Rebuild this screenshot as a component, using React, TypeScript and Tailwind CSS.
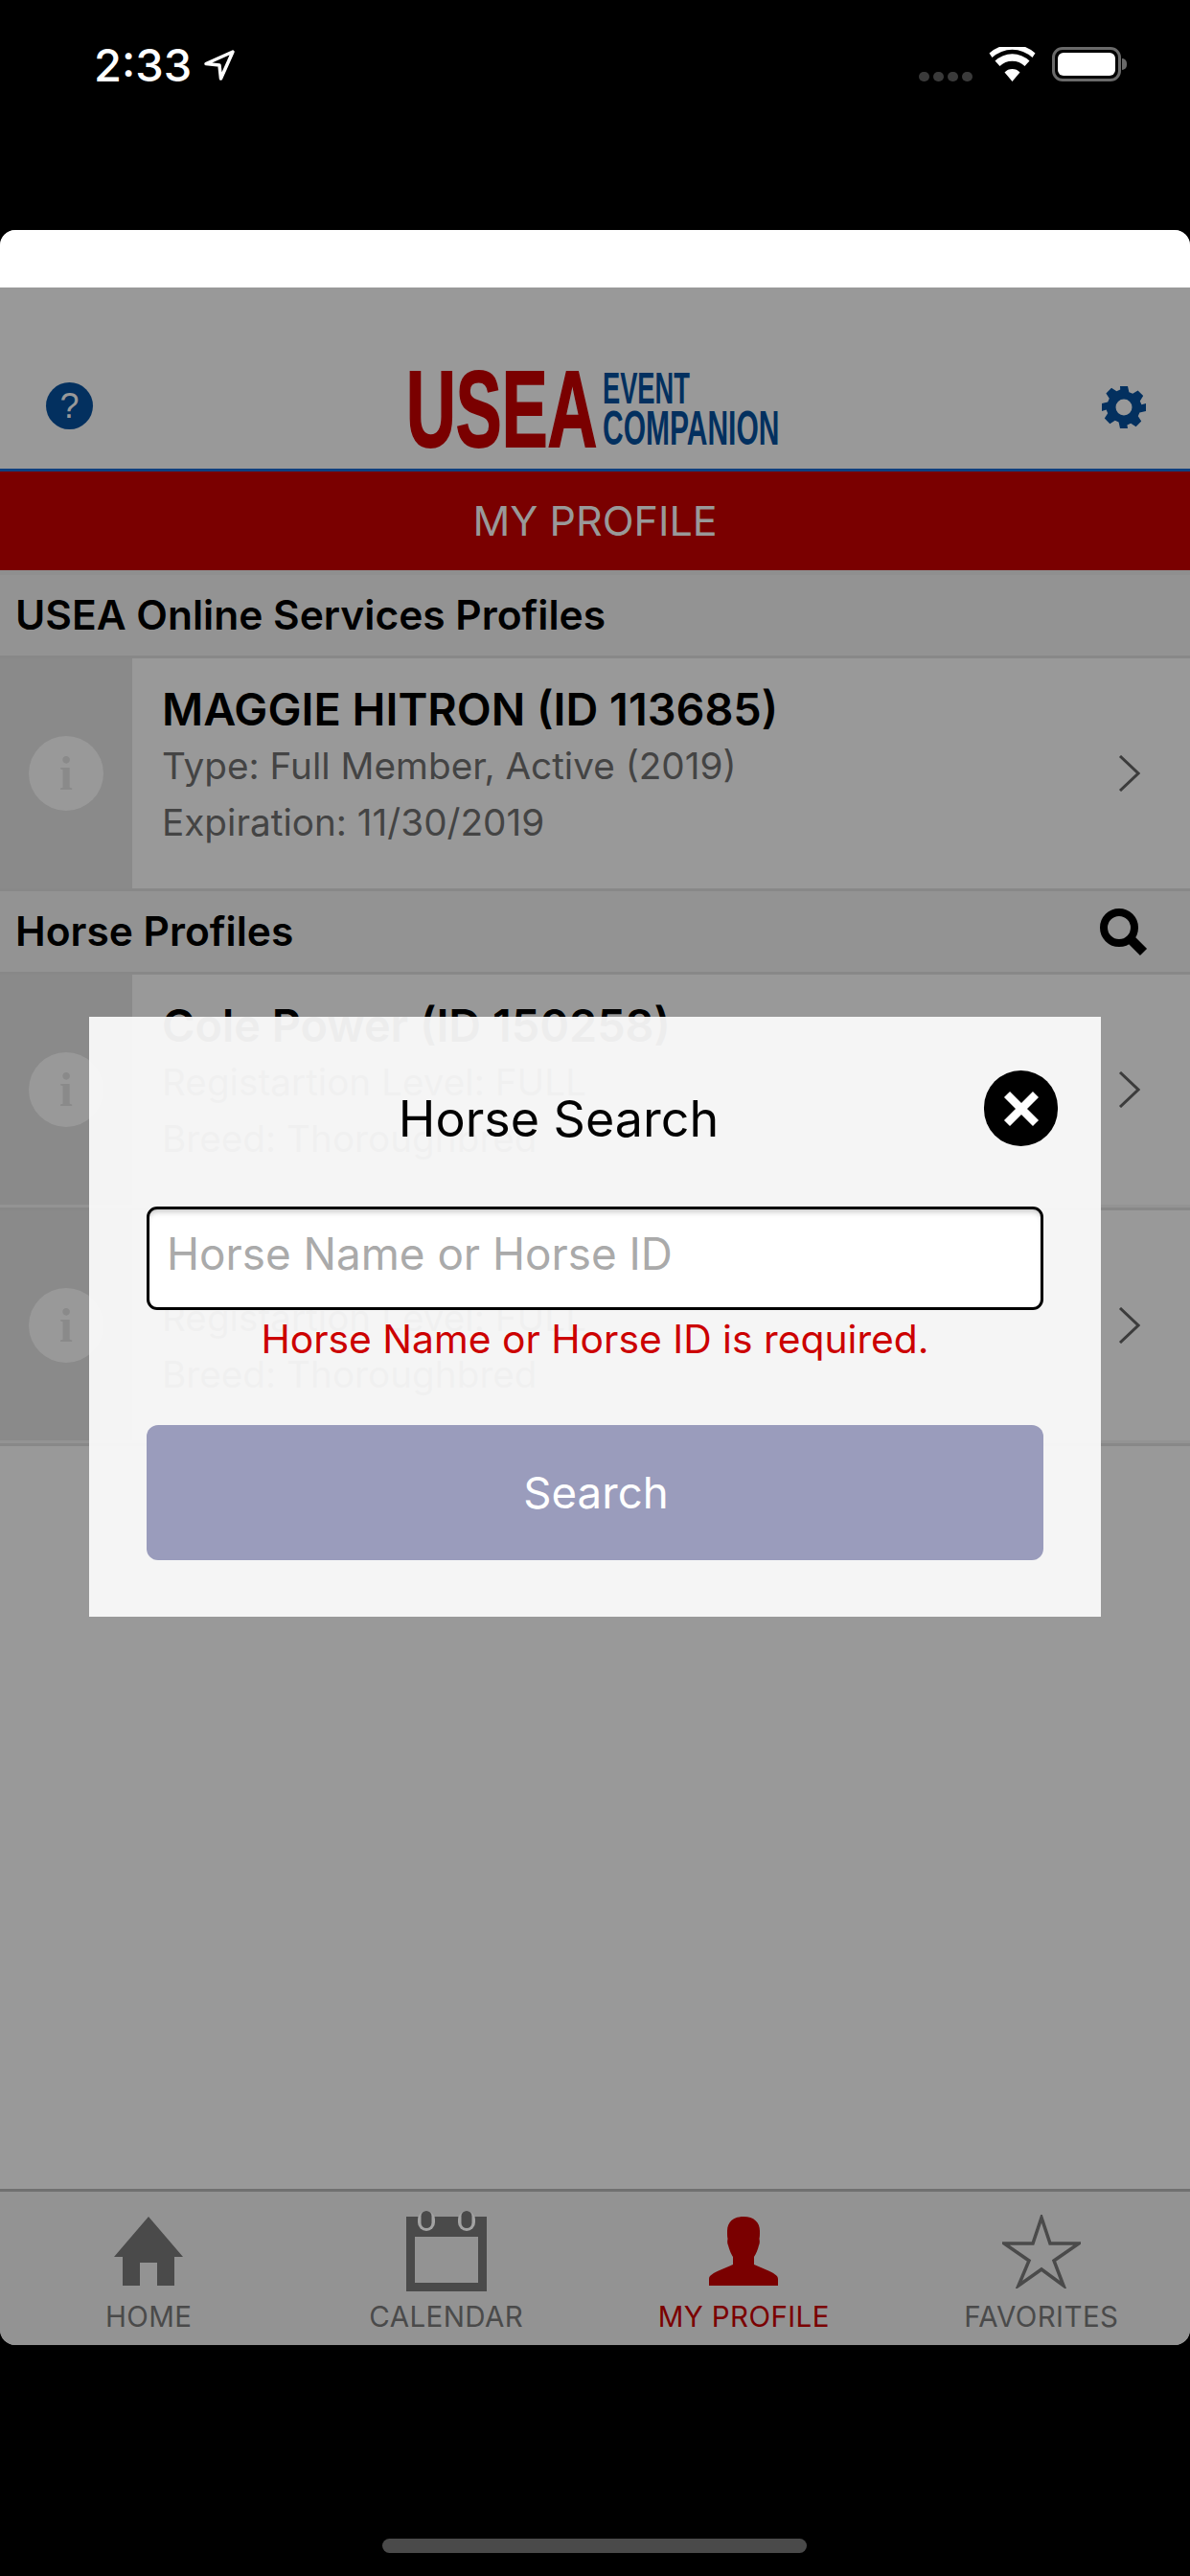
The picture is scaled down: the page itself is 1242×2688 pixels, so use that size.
import type { ReactNode } from "react";

const sans = "font-['Inter','Noto_Sans',sans-serif]";

function HelpIcon() {
  return (
    <div className="w-[49px] h-[49px] rounded-full bg-[#03305f] flex items-center justify-center text-[#999] text-[36px] font-normal font-['Liberation_Sans',sans-serif] leading-none">
      ?
    </div>
  );
}

function GearIcon() {
  return (
    <svg width="46" height="46" viewBox="0 0 46 46">
      <path
        fillRule="evenodd"
        fill="#03305f"
        d="M19 1h8l1.400 6.200 3.800 1.600 5.400-3.400 5.600 5.600-3.400 5.400 1.600 3.800L46 19v8l-6.600 1.400-1.600 3.800 3.400 5.400-5.600 5.600-5.400-3.400-3.800 1.600L27 45h-8l-1.400-6.600-3.800-1.600-5.400 3.400-5.600-5.600 3.400-5.400-1.600-3.800L0 27v-8l6.200-1.400 1.600-3.800-3.400-5.400 5.600-5.600 5.400 3.400 3.800-1.600zM23 14.500a8.500 8.500 0 1 0 0 17 8.500 8.500 0 0 0 0-17z"
      />
    </svg>
  );
}

function Logo() {
  return (
    <div className="flex w-[396px] h-[82px] font-['Liberation_Sans',sans-serif] font-bold">
      <div className="w-[205px] h-[82px] shrink-0">
        <span className="block text-[113px] leading-[82px] text-[#7a0000] whitespace-nowrap origin-left scale-x-[0.635] [-webkit-text-stroke:2px_#7a0000]">
          USEA
        </span>
      </div>
      <div className="flex flex-col text-[#03305f]">
        <div className="h-[42px] w-[191px]">
          <span className="block text-[47px] leading-[38px] whitespace-nowrap origin-left scale-x-[0.58]">EVENT</span>
        </div>
        <div className="h-[38px] w-[191px]">
          <span className="block text-[50px] leading-[38px] whitespace-nowrap origin-left scale-x-[0.6]">COMPANION</span>
        </div>
      </div>
    </div>
  );
}

function InfoBadge() {
  return (
    <div className="w-[78px] h-[78px] rounded-full bg-[#999999] flex items-center justify-center text-[#8a8a8a] text-[50px] font-bold font-['Liberation_Serif',serif] leading-none">
      i
    </div>
  );
}

interface RowProps {
  title: string;
  lines: string[];
}

function ProfileRow({ title, lines }: RowProps) {
  return (
    <div className="flex h-[240px] bg-[#999999]">
      <div className="w-[138px] bg-[#8a8a8a] flex items-center justify-center">
        <InfoBadge />
      </div>
      <div className="flex-1 pl-[31px] pt-[28px]">
        <div className="text-[46.800px] leading-[50px] mb-[5px] font-semibold text-black">{title}</div>
        {lines.map((l) => (
          <div key={l} className="text-[38.700px] leading-[59px] text-[#444444]">
            {l}
          </div>
        ))}
      </div>
      <div className="flex items-center pr-[52px]">
        <svg width="23" height="38" viewBox="0 0 23 38">
          <path d="M2 1l19 18L2 37" fill="none" stroke="#3c3c3c" strokeWidth="3" />
        </svg>
      </div>
    </div>
  );
}

function SectionHeader({ title, search }: { title: string; search?: boolean }) {
  return (
    <div className="flex items-center justify-between h-[84px] bg-[#939393] border-b-[3px] border-[#888888] box-content">
      <div className="pl-[16px] text-[42.500px] font-semibold text-black">{title}</div>
      {search && (
        <svg width="50" height="50" viewBox="0 0 50 50" className="mr-[44px] mt-[2px]">
          <circle cx="20" cy="20" r="16" fill="none" stroke="#000" strokeWidth="8" />
          <path d="M31 31l14.500 14.500" stroke="#000" strokeWidth="10" />
        </svg>
      )}
    </div>
  );
}

function TabItem({ label, active, children }: { label: string; active?: boolean; children: ReactNode }) {
  return (
    <div className="flex-1 flex flex-col items-center pt-[26px]">
      <div className="h-[84px] flex items-start justify-center">{children}</div>
      <div className={`mt-[3px] text-[29.500px] leading-[34px] tracking-[0.4px] ${active ? "text-[#7a0000]" : "text-[#4a4a4a]"}`}>
        {label}
      </div>
    </div>
  );
}

export default function App() {
  return (
    <div className={`relative w-[1242px] h-[2688px] bg-black overflow-hidden ${sans}`}>
      {/* status bar */}
      <div className="h-[240px] pl-[98px] pr-[66px] pt-[41px] flex justify-between items-start text-white">
        <div className="flex items-center gap-[12px]">
          <span className="text-[47px] leading-[54px] font-medium">2:33</span>
          <svg width="34" height="34" viewBox="0 0 34 34">
            <path d="M31 3L3 15.500l14 1.500 1.500 14z" fill="none" stroke="#fff" strokeWidth="3.500" strokeLinejoin="round" />
          </svg>
        </div>
        <div className="flex items-end gap-[17px] mt-[8px]">
          <div className="flex gap-[4px] ml-[2px]">
            <span className="w-[11px] h-[10px] rounded-full bg-[#3a3a3a]" />
            <span className="w-[11px] h-[10px] rounded-full bg-[#3a3a3a]" />
            <span className="w-[11px] h-[10px] rounded-full bg-[#3a3a3a]" />
            <span className="w-[11px] h-[10px] rounded-full bg-[#3a3a3a]" />
          </div>
          <svg width="49" height="36" viewBox="0 0 48 36">
            <path d="M24 36l-8-9.500a11 11 0 0 1 16 0zM11 20l-5-5.500a26 26 0 0 1 36 0L37 20a19 19 0 0 0-26 0zM3 11l-3-4.500a36 36 0 0 1 48 0L45 11a31 31 0 0 0-42 0z" fill="#fff" />
          </svg>
          <div className="flex items-center">
            <div className="w-[72px] h-[36px] rounded-[11px] border-[3px] border-[#6a6a6a] p-[3px]">
              <div className="w-full h-full bg-white rounded-[6px]" />
            </div>
            <div className="w-[5px] h-[12px] bg-[#6a6a6a] rounded-r-full ml-[1px]" />
          </div>
        </div>
      </div>

      {/* app */}
      <div className="h-[2207px] rounded-[16px] overflow-hidden flex flex-col bg-[#999999]">
        <div className="h-[60px] bg-white shrink-0" />
        <div className="h-[192px] bg-[#999999] flex justify-between border-b-[3px] border-[#0f3f7f] shrink-0">
          <div className="flex-1 flex items-end pl-[48px] pb-[41px]">
            <HelpIcon />
          </div>
          <div className="pt-[86px]">
            <Logo />
          </div>
          <div className="flex-1 flex items-end justify-end pr-[46px] pb-[41px]">
            <GearIcon />
          </div>
        </div>
        <div className="h-[103px] bg-[#7a0000] shrink-0 flex items-center justify-center text-[#999999] text-[43px]">
          MY PROFILE
        </div>
        <div className="h-[5px] bg-[#8f8f8f] shrink-0" />
        <SectionHeader title="USEA Online Services Profiles" />
        <ProfileRow title="MAGGIE HITRON (ID 113685)" lines={["Type: Full Member, Active (2019)", "Expiration: 11/30/2019"]} />
        <div className="h-[3px] bg-[#888888] shrink-0" />
        <SectionHeader title="Horse Profiles" search />
        <ProfileRow title="Cole Power (ID 150258)" lines={["Registartion Level: FULL", "Breed: Thoroughbred"]} />
        <div className="h-[3px] bg-[#939393] shrink-0" />
        <div className="h-[3px] bg-[#888888] shrink-0" />
        <ProfileRow title="Cole Power (ID 150258)" lines={["Registartion Level: FULL", "Breed: Thoroughbred"]} />
        <div className="h-[3px] bg-[#939393] shrink-0" />
        <div className="h-[3px] bg-[#888888] shrink-0" />
        <div className="flex-1" />
        <div className="h-[163px] border-t-[3px] border-[#707070] bg-[#939393] flex shrink-0">
          <TabItem label="HOME">
            <svg width="72" height="72" viewBox="0 0 72 72">
              <path d="M36 0L72 42H63V72H45V48H27V72H9V42H0z" fill="#4a4a4a" />
            </svg>
          </TabItem>
          <TabItem label="CALENDAR">
            <svg width="84" height="84" viewBox="0 0 84 84" className="-mt-[6px]">
              <path fillRule="evenodd" d="M0 6h84v78H0zM9 27v48h66V27z" fill="#4a4a4a" />
              <rect x="12" y="0" width="18" height="21" rx="9" fill="#a3a3a3" />
              <rect x="54" y="0" width="18" height="21" rx="9" fill="#a3a3a3" />
              <rect x="15.500" y="0" width="11" height="18" rx="5.500" fill="#4a4a4a" />
              <rect x="57.500" y="0" width="11" height="18" rx="5.500" fill="#4a4a4a" />
            </svg>
          </TabItem>
          <TabItem label="MY PROFILE" active>
            <svg width="72" height="72" viewBox="0 0 72 72">
              <path d="M36 0c11 0 17 6 17 15 0 4 0 6-0.500 8 0.500 3 0.500 5-0.500 7-1 4-3 9-5 12v8l14 6c6 3 11 5 11 9v7H0v-7c0-4 5-6 11-9l14-6v-8c-2-3-4-8-5-12-1-2-1-4-0.500-7C19 21 19 19 19 15 19 6 25 0 36 0z" fill="#7a0000" />
            </svg>
          </TabItem>
          <TabItem label="FAVORITES">
            <svg width="82" height="77" viewBox="0 0 82 77" className="-mt-[2px]">
              <path d="M41 3l9 27h30L54 48l10 26-23-17-24 17 11-26L2 30h30z" fill="none" stroke="#4a4a4a" strokeWidth="3.500" />
            </svg>
          </TabItem>
        </div>
      </div>

      {/* home indicator */}
      <div className="absolute left-[399px] top-[2649px] w-[443px] h-[15px] rounded-full bg-[#4a4a4a]" />

      {/* modal */}
      <div className="absolute left-[93px] top-[1061px] w-[1056px] h-[626px] bg-[#fafafa]/95 flex flex-col">
        <div className="flex items-start pl-[46px] pr-[45px] h-[198px] shrink-0">
          <div className="flex-1 text-center text-[52px] leading-[62px] text-black mt-[76px]">Horse Search</div>
          <button className="w-[77px] h-[79px] rounded-full bg-black flex items-center justify-center mt-[56px]">
            <svg width="40" height="40" viewBox="0 0 40 40">
              <path d="M5 5l30 30M35 5L5 35" stroke="#fff" strokeWidth="8.500" />
            </svg>
          </button>
        </div>
        <div className="px-[60px]">
          <div className="h-[108px] rounded-[11px] border-[3px] border-black bg-white shadow-[inset_0_6px_6px_-4px_rgba(0,0,0,0.25)] flex items-center pl-[18px] pb-[8px]">
            <span className="text-[45.800px] text-[#aaaaaa]">Horse Name or Horse ID</span>
          </div>
          <div className="text-center text-[#cc0000] text-[40.800px] leading-[50px] mt-[5px]">
            Horse Name or Horse ID is required.
          </div>
          <button className="mt-[65px] w-full h-[141px] rounded-[12px] bg-[#9a9cbc] text-white text-[45.600px] pt-[2px] pl-[2px]">Search</button>
        </div>
      </div>
    </div>
  );
}
